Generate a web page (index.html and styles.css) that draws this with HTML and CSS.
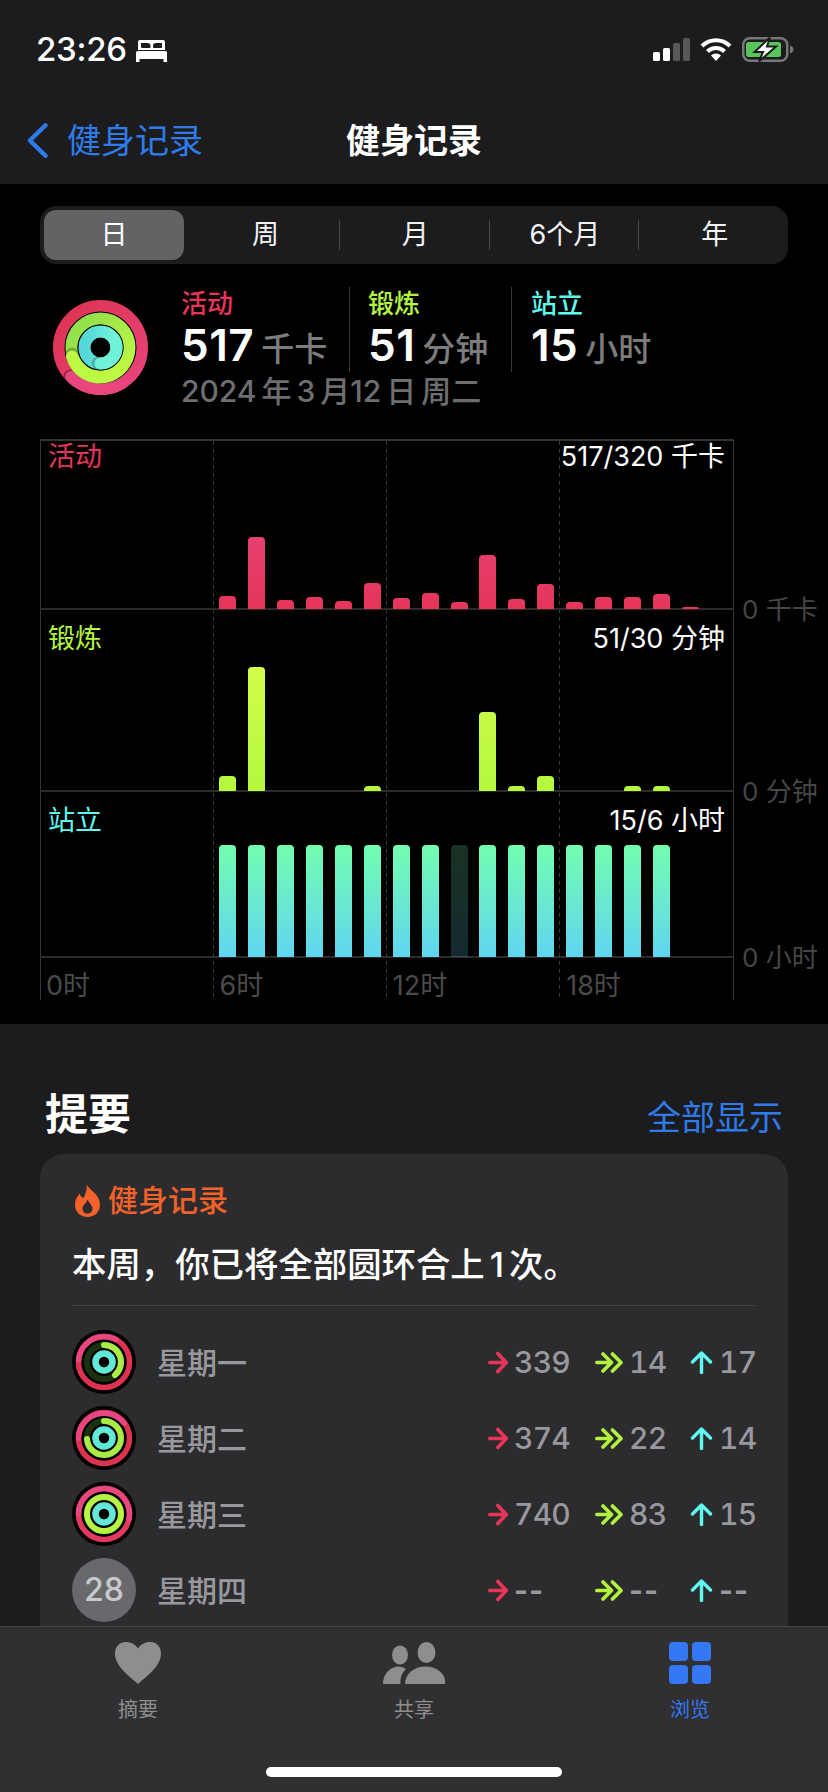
FILE: index.html
```html
<!DOCTYPE html>
<html lang="zh-CN">
<head>
<meta charset="utf-8">
<title>健身记录</title>
<link rel="stylesheet" href="styles.css">
</head>
<body>
<div class="page">
  <header class="top">
    <div class="status">
      <div class="status-left">
        <span class="time">23:26</span>
        <svg class="bed" viewBox="0 0 31 22"><path fill="#fff" fill-rule="evenodd" d="M4 0H27A2 2 0 0 1 29 2V10H2V2A2 2 0 0 1 4 0ZM5 3V7A1 1 0 0 0 6 8H13.500A1 1 0 0 0 14.500 7V6A3 3 0 0 0 11.500 3ZM17 6V7A1 1 0 0 0 18 8H25A1 1 0 0 0 26 7V3H20A3 3 0 0 0 17 6ZM0 12.500A1.500 1.500 0 0 1 1.500 11H29.500A1.500 1.500 0 0 1 31 12.500V22H27.500V19H3.500V22H0Z"/></svg>
      </div>
      <div class="status-right">
        <svg class="signal" viewBox="0 0 38 23"><rect x="0" y="14" width="7" height="9" rx="1.500" fill="#fff"/><rect x="10" y="10" width="7" height="13" rx="1.500" fill="#fff"/><rect x="20" y="5" width="7" height="18" rx="1.500" fill="#58585a"/><rect x="30" y="0" width="7" height="23" rx="1.500" fill="#58585a"/></svg>
        <svg class="wifi" viewBox="0 0 32 24"><path d="M2 9A20 20 0 0 1 30 9M7.500 14.500A12 12 0 0 1 24.500 14.500" fill="none" stroke="#fff" stroke-width="4"/><path d="M16 24L11 18.500A7 7 0 0 1 21 18.500Z" fill="#fff"/></svg>
        <svg class="battery" viewBox="0 0 52 25"><rect x="1.250" y="1.250" width="44" height="22.500" rx="6.500" fill="none" stroke="#77777a" stroke-width="2.500"/><rect x="4" y="5" width="35" height="15" rx="2.500" fill="#59c45c"/><path d="M48 8.500C50.500 9.500 51.500 11 51.500 12.500S50.500 15.500 48 16.500Z" fill="#77777a"/><path d="M28 0.500L12.500 15H21L17 24.500L34 9.500H25Z" fill="#fff" stroke="#1c1c1e" stroke-width="2"/></svg>
      </div>
    </div>
    <nav class="nav">
      <div class="back">
        <svg class="chev" viewBox="0 0 24 37"><path d="M20.500 2.500L4 18.500L20.500 34.500" fill="none" stroke="#2f7bea" stroke-width="4.500" stroke-linecap="round" stroke-linejoin="round"/></svg>
        <span>健身记录</span>
      </div>
      <h1 class="title">健身记录</h1>
    </nav>
  </header>

  <main class="dark">
    <div class="seg">
      <div class="seg-item seg-on">日</div>
      <div class="seg-item seg-2">周</div>
      <div class="seg-item seg-sep">月</div>
      <div class="seg-item seg-sep">6个月</div>
      <div class="seg-item seg-sep">年</div>
    </div>

    <section class="stats">
      <svg class="big-ring" viewBox="0 0 95 95">
        <defs>
          <linearGradient id="bigP" x1="0" y1="0" x2="1" y2="1"><stop offset="0" stop-color="#dd3350"/><stop offset="1" stop-color="#e8447d"/></linearGradient>
          <linearGradient id="bigG" x1="0" y1="0" x2="1" y2="1"><stop offset="0" stop-color="#8cdc4c"/><stop offset="1" stop-color="#c2fb42"/></linearGradient>
          <linearGradient id="bigC" x1="0" y1="0" x2="1" y2="0"><stop offset="0" stop-color="#55d6d8"/><stop offset="1" stop-color="#72f6d8"/></linearGradient>
        </defs>
        <circle cx="47.500" cy="47.500" r="41.500" fill="none" stroke="url(#bigP)" stroke-width="12"/>
        <circle cx="17" cy="76" r="6.500" fill="#000" opacity="0.35"/>
        <path d="M18.200 76.800A41.500 41.500 0 0 0 70 82.500" fill="none" stroke="#e9467f" stroke-width="12" stroke-linecap="round"/>
        <circle cx="47.500" cy="47.500" r="29.500" fill="none" stroke="#000" stroke-width="13"/>
        <circle cx="47.500" cy="47.500" r="29" fill="none" stroke="url(#bigG)" stroke-width="12"/>
        <circle cx="19" cy="54" r="6.500" fill="#000" opacity="0.25"/>
        <path d="M19 56.500A29 29 0 0 0 70 66" fill="none" stroke="#bdf943" stroke-width="12" stroke-linecap="round"/>
        <circle cx="47.500" cy="47.500" r="16.500" fill="none" stroke="#000" stroke-width="13"/>
        <circle cx="47.500" cy="47.500" r="16" fill="none" stroke="url(#bigC)" stroke-width="12"/>
        <circle cx="45" cy="63" r="6.500" fill="#000" opacity="0.2"/>
        <path d="M47.500 63.500A16 16 0 0 0 63.500 47.500" fill="none" stroke="#6ff3d8" stroke-width="12" stroke-linecap="round"/>
        <path d="M63.500 47.500A16 16 0 0 0 60 37.500" fill="none" stroke="#6ff3d8" stroke-width="12"/>
      </svg>
      <div class="stat-body">
        <div class="stat-cols">
          <div class="stat s1">
            <div class="stat-label red">活动</div>
            <div class="stat-val">517<span class="unit">千卡</span></div>
          </div>
          <div class="stat s2">
            <div class="stat-label lime">锻炼</div>
            <div class="stat-val">51<span class="unit">分钟</span></div>
          </div>
          <div class="stat s3">
            <div class="stat-label cyan">站立</div>
            <div class="stat-val">15<span class="unit">小时</span></div>
          </div>
        </div>
        <div class="date">2024 年 3 月12 日 周二</div>
      </div>
    </section>

    <section class="chart">
      <div class="vlines"><i></i><i></i><i></i></div>
      <div class="crow r1">
        <div class="plot">
          <div class="plot-head"><span class="red">活动</span><span>517/320 千卡</span></div>
          <div class="bars act">
            <i style="height:13px"></i><i style="height:72px"></i><i style="height:9px"></i><i style="height:12px"></i><i style="height:8px"></i><i style="height:26px"></i><i style="height:11px"></i><i style="height:16px"></i><i style="height:7px"></i><i style="height:54px"></i><i style="height:10px"></i><i style="height:25px"></i><i style="height:7px"></i><i style="height:12px"></i><i style="height:12px"></i><i style="height:15px"></i><i style="height:2px"></i>
          </div>
        </div>
        <div class="axis">0 千卡</div>
      </div>
      <div class="crow r2">
        <div class="plot">
          <div class="plot-head"><span class="lime">锻炼</span><span>51/30 分钟</span></div>
          <div class="bars exe">
            <i style="height:15px"></i><i style="height:124px"></i><i></i><i></i><i></i><i style="height:5px"></i><i></i><i></i><i></i><i style="height:79px"></i><i style="height:5px"></i><i style="height:15px"></i><i></i><i></i><i style="height:5px"></i><i style="height:5px"></i>
          </div>
        </div>
        <div class="axis">0 分钟</div>
      </div>
      <div class="crow r3">
        <div class="plot">
          <div class="plot-head"><span class="cyan">站立</span><span>15/6 小时</span></div>
          <div class="bars std">
            <i></i><i></i><i></i><i></i><i></i><i></i><i></i><i></i><i class="dim"></i><i></i><i></i><i></i><i></i><i></i><i></i><i></i>
          </div>
        </div>
        <div class="axis">0 小时</div>
      </div>
      <div class="hours"><span>0时</span><span>6时</span><span>12时</span><span>18时</span></div>
    </section>
  </main>

  <section class="summary">
    <div class="sum-head">
      <h2>提要</h2>
      <a class="show-all">全部显示</a>
    </div>
    <div class="card">
      <div class="card-title">
        <svg class="flame" viewBox="0 0 25 33"><path fill="#f2622a" fill-rule="evenodd" d="M11.500 0C14 6 25 10 25 21C25 28 19.500 33 12.500 33C5.500 33 0 28 0 21C0 15.500 2.500 12.500 4.500 9.500C5.500 12 6.500 13.500 8.500 14C10.500 10 12.500 5 11.500 0ZM12.500 29.500C15.500 29.500 17.500 27.500 17.500 24.500C17.500 21.500 14.500 19.500 12.500 15.500C11.500 19.500 7.500 21 7.500 24.500C7.500 27.500 9.500 29.500 12.500 29.500Z"/></svg>
        <span>健身记录</span>
      </div>
      <p class="headline">本周，你已将全部圆环合上<span class="num">1</span>次。</p>
      <div class="rows">
        <div class="row">
          <svg class="mini" viewBox="0 0 64 64"><circle cx="32" cy="32" r="32" fill="#000"/><circle cx="32" cy="32" r="25.500" fill="none" stroke="#dd3350" stroke-width="5.500"/><path d="M32 6.500A25.500 25.500 0 0 1 44 9.500" fill="none" stroke="#e9467f" stroke-width="5.500" stroke-linecap="round"/><path d="M6.500 32A25.500 25.500 0 0 1 32 6.500" fill="none" stroke="#e9467f" stroke-width="5.500"/><circle cx="32" cy="32" r="17" fill="none" stroke="#1a3210" stroke-width="6"/><path d="M32 15A17 17 0 0 1 43 45" fill="none" stroke="#a9ec45" stroke-width="6" stroke-linecap="round"/><circle cx="32" cy="32" r="8.500" fill="none" stroke="#62e8d8" stroke-width="6.500"/></svg>
          <span class="day">星期一</span>
          <div class="vals">
            <div class="v v1"><svg class="a1" viewBox="0 0 20 23"><path d="M1.800 11.500H18M9.800 2.500L18.300 11.500L9.800 20.500" fill="none" stroke="#e8355a" stroke-width="3.600" stroke-linecap="round" stroke-linejoin="round"/></svg><span>339</span></div>
            <div class="v v2"><svg class="a2" viewBox="0 0 28 23"><path d="M1.800 11.500H14M8 3L16.500 11.500L8 20M17.500 3L26 11.500L17.500 20" fill="none" stroke="#b1f53f" stroke-width="3.600" stroke-linecap="round" stroke-linejoin="round"/></svg><span>14</span></div>
            <div class="v v3"><svg class="a3" viewBox="0 0 23 23"><path d="M11.500 21.500V3M2.500 11L11.500 2L20.500 11" fill="none" stroke="#5ffaf0" stroke-width="3.400" stroke-linecap="round" stroke-linejoin="round"/></svg><span>17</span></div>
          </div>
        </div>
        <div class="row">
          <svg class="mini" viewBox="0 0 64 64"><circle cx="32" cy="32" r="32" fill="#000"/><circle cx="32" cy="32" r="25.500" fill="none" stroke="#dd3350" stroke-width="5.500"/><path d="M6.500 32A25.500 25.500 0 0 1 52 17" fill="none" stroke="#e9467f" stroke-width="5.500" stroke-linecap="round"/><circle cx="32" cy="32" r="17" fill="none" stroke="#1a3210" stroke-width="6"/><path d="M32 15A17 17 0 1 1 15 33" fill="none" stroke="#a9ec45" stroke-width="6" stroke-linecap="round"/><circle cx="32" cy="32" r="8.500" fill="none" stroke="#62e8d8" stroke-width="6.500"/></svg>
          <span class="day">星期二</span>
          <div class="vals">
            <div class="v v1"><svg class="a1" viewBox="0 0 20 23"><path d="M1.800 11.500H18M9.800 2.500L18.300 11.500L9.800 20.500" fill="none" stroke="#e8355a" stroke-width="3.600" stroke-linecap="round" stroke-linejoin="round"/></svg><span>374</span></div>
            <div class="v v2"><svg class="a2" viewBox="0 0 28 23"><path d="M1.800 11.500H14M8 3L16.500 11.500L8 20M17.500 3L26 11.500L17.500 20" fill="none" stroke="#b1f53f" stroke-width="3.600" stroke-linecap="round" stroke-linejoin="round"/></svg><span>22</span></div>
            <div class="v v3"><svg class="a3" viewBox="0 0 23 23"><path d="M11.500 21.500V3M2.500 11L11.500 2L20.500 11" fill="none" stroke="#5ffaf0" stroke-width="3.400" stroke-linecap="round" stroke-linejoin="round"/></svg><span>14</span></div>
          </div>
        </div>
        <div class="row">
          <svg class="mini" viewBox="0 0 64 64"><circle cx="32" cy="32" r="32" fill="#000"/><circle cx="32" cy="32" r="25.500" fill="none" stroke="#e13a5e" stroke-width="5.500"/><path d="M6.500 32A25.500 25.500 0 1 1 57 37" fill="none" stroke="#e9467f" stroke-width="5.500" stroke-linecap="round"/><circle cx="32" cy="32" r="17" fill="none" stroke="#b6f443" stroke-width="6"/><circle cx="32" cy="32" r="8.500" fill="none" stroke="#62e8d8" stroke-width="6.500"/></svg>
          <span class="day">星期三</span>
          <div class="vals">
            <div class="v v1"><svg class="a1" viewBox="0 0 20 23"><path d="M1.800 11.500H18M9.800 2.500L18.300 11.500L9.800 20.500" fill="none" stroke="#e8355a" stroke-width="3.600" stroke-linecap="round" stroke-linejoin="round"/></svg><span>740</span></div>
            <div class="v v2"><svg class="a2" viewBox="0 0 28 23"><path d="M1.800 11.500H14M8 3L16.500 11.500L8 20M17.500 3L26 11.500L17.500 20" fill="none" stroke="#b1f53f" stroke-width="3.600" stroke-linecap="round" stroke-linejoin="round"/></svg><span>83</span></div>
            <div class="v v3"><svg class="a3" viewBox="0 0 23 23"><path d="M11.500 21.500V3M2.500 11L11.500 2L20.500 11" fill="none" stroke="#5ffaf0" stroke-width="3.400" stroke-linecap="round" stroke-linejoin="round"/></svg><span>15</span></div>
          </div>
        </div>
        <div class="row">
          <div class="day-badge">28</div>
          <span class="day">星期四</span>
          <div class="vals">
            <div class="v v1"><svg class="a1" viewBox="0 0 20 23"><path d="M1.800 11.500H18M9.800 2.500L18.300 11.500L9.800 20.500" fill="none" stroke="#e8355a" stroke-width="3.600" stroke-linecap="round" stroke-linejoin="round"/></svg><span class="nil">--</span></div>
            <div class="v v2"><svg class="a2" viewBox="0 0 28 23"><path d="M1.800 11.500H14M8 3L16.500 11.500L8 20M17.500 3L26 11.500L17.500 20" fill="none" stroke="#b1f53f" stroke-width="3.600" stroke-linecap="round" stroke-linejoin="round"/></svg><span class="nil">--</span></div>
            <div class="v v3"><svg class="a3" viewBox="0 0 23 23"><path d="M11.500 21.500V3M2.500 11L11.500 2L20.500 11" fill="none" stroke="#5ffaf0" stroke-width="3.400" stroke-linecap="round" stroke-linejoin="round"/></svg><span class="nil">--</span></div>
          </div>
        </div>
      </div>
    </div>
  </section>

  <footer class="tabbar">
    <div class="tabs">
      <div class="tab">
        <svg class="tab-icon" viewBox="0 0 46 42"><path fill="#8e8e8e" d="M23 42C13 33 0 24 0 11.500C0 4.500 4.500 0 11 0C16 0 20.500 2.500 23 6.500C25.500 2.500 30 0 35 0C41.500 0 46 4.500 46 11.500C46 24 33 33 23 42Z"/></svg>
        <span>摘要</span>
      </div>
      <div class="tab">
        <svg class="tab-icon" viewBox="0 0 62 42"><g fill="#8e8e8e"><ellipse cx="17" cy="13" rx="8" ry="9.500"/><ellipse cx="43.500" cy="10.500" rx="9" ry="10.500"/><path d="M0 42C0 33 6 25 15 24.500C18 24.500 21 25.500 23 27C19 30.500 17 36 17.500 42Z"/><path d="M22 42C22 32 31 24.500 42.500 24.500C54 24.500 62 32 62 39V42Z"/></g></svg>
        <span>共享</span>
      </div>
      <div class="tab tab-on">
        <div class="tile-grid"><i></i><i></i><i></i><i></i></div>
        <span>浏览</span>
      </div>
    </div>
    <div class="home"></div>
  </footer>
</div>
</body>
</html>
```

FILE: styles.css
```css
* { box-sizing: border-box; margin: 0; padding: 0; }
html, body { background: #000; }
body {
  font-family: Inter, "Noto Sans CJK SC", sans-serif;
  color: #fff;
}
.page {
  position: relative;
  width: 828px;
  height: 1792px;
  overflow: hidden;
  background: #000;
}
svg { display: block; flex: none; }

/* top */
.top { height: 184px; background: #1c1c1e; }
.status {
  height: 99px;
  padding: 37px 34px 0 36px;
  display: flex;
  justify-content: space-between;
  align-items: flex-start;
}
.status-left { display: flex; align-items: center; gap: 9px; height: 25px; }
.time { font-size: 33px; font-weight: 500; line-height: 25px; letter-spacing: -0.3px; }
.bed { width: 31px; height: 22px; margin-top: 2px; }
.status-right { display: flex; align-items: flex-start; }
.signal { width: 38px; height: 23px; margin: 1px 9px 0 0; }
.wifi { width: 32px; height: 24px; margin: 0 10px 0 0; }
.battery { width: 52px; height: 25px; }
.nav {
  position: relative;
  height: 85px;
  display: flex;
  align-items: flex-start;
  justify-content: center;
}
.back {
  position: absolute;
  left: 26px;
  top: 23px;
  display: flex;
  align-items: center;
  gap: 18px;
  color: #2f7bea;
  font-size: 34px;
  line-height: 37px;
}
.chev { width: 23px; height: 37px; }
.title { font-size: 34px; font-weight: 700; line-height: 37px; margin-top: 23px; }

/* dark panel */
.dark { height: 840px; padding-top: 22px; background: #000; }
.seg {
  display: flex;
  margin: 0 40px;
  height: 58px;
  padding: 4px 0 4px 4px;
  background: #1c1c1e;
  border-radius: 16px;
}
.seg-item {
  position: relative;
  flex: 1;
  display: flex;
  align-items: center;
  justify-content: center;
  font-size: 27px;
  line-height: 46px;
  padding-left: 3px;
  color: #f2f2f2;
}
.seg-on {
  flex: none;
  width: 140px;
  padding-left: 0;
  background: #636366;
  border-radius: 12px;
  color: #fff;
}
.seg-2 { margin-left: 5px; }
.seg-sep::before {
  content: "";
  position: absolute;
  left: 0;
  top: 10px;
  bottom: 10px;
  width: 1px;
  background: #48484a;
}

.stats { display: flex; height: 175px; padding: 23px 0 0 53px; align-items: flex-start; }
.big-ring { width: 95px; height: 95px; margin-top: 13px; }
.stat-body { margin-left: 33px; }
.stat-cols { display: flex; height: 85px; }
.stat { height: 85px; padding-top: 2px; }
.s1 { width: 168px; }
.s2 { width: 162px; padding-left: 18px; border-left: 1px solid #3a3a3c; }
.s3 { padding-left: 19px; border-left: 1px solid #3a3a3c; }
.stat-label { font-size: 26px; line-height: 30px; font-weight: 500; }
.stat-val {
  font-size: 44px;
  font-weight: 600;
  line-height: 46px;
  margin-top: 3px;
  letter-spacing: 0.5px;
  white-space: nowrap;
}
.unit { font-size: 33px; font-weight: 500; color: #7c7c7c; margin-left: 7px; letter-spacing: 0; }
.date { font-size: 30px; font-weight: 500; line-height: 36px; color: #6e6e70; margin-top: 1px; word-spacing: -3px; white-space: nowrap; }

.red { color: #e8355a; }
.lime { color: #b4f53f; }
.cyan { color: #5ffaf0; }

/* chart */
.chart { position: relative; margin-left: 40px; width: 788px; height: 561px; }
.vlines {
  position: absolute;
  left: 0;
  top: 0;
  width: 694px;
  height: 561px;
  border: 1px solid #333;
  border-top-width: 2px;
  border-bottom: 0;
  display: grid;
  grid-template-columns: repeat(4, 1fr);
  pointer-events: none;
}
.vlines i {
  display: block;
  height: 557px;
  background: repeating-linear-gradient(to bottom, #3a3a3a 0 4px, transparent 4px 8px) right top / 1px 100% no-repeat;
}
.crow { display: grid; grid-template-columns: 694px 94px; align-items: end; position: relative; }
.r1 { height: 171px; }
.r2 { height: 182px; }
.r3 { height: 166px; }
.plot {
  height: 100%;
  border-bottom: 2px solid #2c2c2c;
  display: flex;
  flex-direction: column;
  justify-content: space-between;
  position: relative;
}
.plot-head {
  display: flex;
  justify-content: space-between;
  padding: 0 9px 0 8px;
  font-size: 27px;
  line-height: 30px;
  color: #fff;
}
.r1 .plot-head { margin-top: 3px; }
.r2 .plot-head { margin-top: 14px; }
.r3 .plot-head { margin-top: 14px; }
.bars {
  margin-left: 173.500px;
  margin-bottom: -1px;
  width: 520px;
  display: grid;
  grid-template-columns: repeat(18, 1fr);
  align-items: end;
  justify-items: center;
}
.bars i { display: block; width: 17px; border-radius: 4px 4px 0 0; }
.act i { background: linear-gradient(to top, #e5355a 0, #e6406f 72px); }
.exe i { background: linear-gradient(to top, #b3f83f 0, #d3fd4a 124px); }
.std i { height: 112px; background: linear-gradient(to top, #60d5f0, #74fdb0); }
.std i.dim { opacity: 0.2; }
.axis {
  font-size: 26px;
  line-height: 34px;
  margin-bottom: -17px;
  padding-left: 8px;
  color: #464646;
  white-space: nowrap;
}
.hours {
  display: grid;
  grid-template-columns: repeat(4, 173.400px);
  padding-left: 6px;
  height: 42px;
  font-size: 27px;
  line-height: 56px;
  color: #4a4a4a;
}
.hours span { white-space: nowrap; }

/* summary */
.summary { height: 768px; background: #1c1c1e; padding: 0 40px; }
.sum-head {
  height: 130px;
  display: flex;
  justify-content: space-between;
  padding: 68px 5px 0 5px;
}
.sum-head h2 { font-size: 43px; line-height: 44px; font-weight: 700; }
.show-all { font-size: 34px; line-height: 44px; color: #2f7bea; margin-top: 4px; }
.card {
  height: 640px;
  background: #2c2c2e;
  border-radius: 24px;
  padding: 29px 32px 0;
}
.card-title { display: flex; align-items: center; gap: 8px; margin-left: 3px; color: #f2622a; font-size: 30px; font-weight: 500; line-height: 34px; }
.flame { width: 25px; height: 33px; }
.headline {
  font-size: 34.400px;
  font-weight: 500;
  line-height: 46px;
  margin-top: 25px;
  white-space: nowrap;
  padding-bottom: 17px;
  border-bottom: 1px solid #444446;
  height: 64px;
}
.num { margin: 0 5px; }
.rows { margin-top: 24px; display: flex; flex-direction: column; gap: 12px; }
.row { display: flex; align-items: center; height: 64px; }
.mini { width: 64px; height: 64px; }
.day-badge {
  width: 64px;
  height: 64px;
  flex: none;
  border-radius: 50%;
  background: #69696d;
  color: #c9c9cd;
  font-size: 32px;
  font-weight: 500;
  text-align: center;
  line-height: 64px;
}
.day { margin-left: 21px; font-size: 30px; font-weight: 500; color: #98989e; padding-bottom: 3px; }
.vals { margin-left: auto; display: flex; }
.v {
  display: flex;
  align-items: center;
  font-size: 30px;
  font-weight: 500;
  color: #98989e;
  line-height: 36px;
  gap: 6px;
  white-space: nowrap;
  font-variant-numeric: tabular-nums;
  letter-spacing: -0.8px;
}
.nil { font-variant-numeric: normal; font-weight: 700; letter-spacing: 1px; }
.v1 { width: 107px; }
.v2 { width: 95px; }
.v3 { width: 66px; }
.a1 { width: 20px; height: 23px; }
.a2 { width: 28px; height: 23px; }
.a3 { width: 23px; height: 23px; }

/* tab bar */
.tabbar {
  position: absolute;
  left: 0;
  right: 0;
  bottom: 0;
  height: 166px;
  background: #303032;
  border-top: 1px solid #454547;
}
.tabs { display: grid; grid-template-columns: repeat(3, 1fr); padding-top: 15px; }
.tab {
  display: flex;
  flex-direction: column;
  align-items: center;
  gap: 13px;
  font-size: 20px;
  line-height: 26px;
  color: #8e8e8e;
}
.tab-icon { height: 42px; width: auto; }
.tab-on { color: #3478f6; }
.tile-grid {
  width: 42px;
  height: 42px;
  display: grid;
  grid-template-columns: 1fr 1fr;
  gap: 4px;
}
.tile-grid i { display: block; background: #3478f6; border-radius: 4px; }
.home {
  position: absolute;
  left: 266px;
  top: 140px;
  width: 296px;
  height: 10px;
  border-radius: 5px;
  background: #fff;
}
```
